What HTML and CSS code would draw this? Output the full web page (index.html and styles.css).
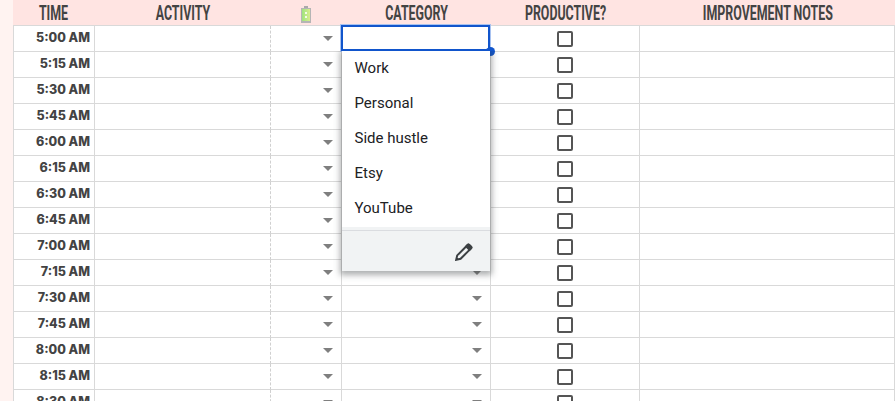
FILE: index.html
```html
<!DOCTYPE html>
<html lang="en">
<head>
<meta charset="utf-8">
<title>Time tracker</title>
<link rel="stylesheet" href="styles.css">
</head>
<body>
<div class="page">
  <div class="gutter"></div>
  <div class="sheet">
    <div class="row head">
      <div class="h"><span>TIME</span></div>
      <div class="h"><span>ACTIVITY</span></div>
      <div class="h"><svg class="battery" width="10" height="17" viewBox="0 0 10 17"><defs><linearGradient id="g" x1="0" x2="1" y1="0" y2="0"><stop offset="0" stop-color="#9fe37f"/><stop offset="1" stop-color="#d9ee8e"/></linearGradient></defs><rect x="3" y="0" width="4" height="2" fill="#a9a9a9"/><rect x="0" y="2" width="10" height="15" fill="#b5b5b5"/><rect x="1" y="3" width="8" height="12" fill="url(#g)"/><rect x="4" y="6" width="2" height="2" fill="#f4fbe8"/><rect x="4" y="10" width="2" height="2" fill="#f4fbe8"/></svg></div>
      <div class="h"><span>CATEGORY</span></div>
      <div class="h"><span>PRODUCTIVE?</span></div>
      <div class="h"><span>IMPROVEMENT NOTES</span></div>
    </div>
    <div class="row"><div class="c t">5:00 AM</div><div class="c"></div><div class="c e"><i class="a"></i></div><div class="c k"></div><div class="c p"><i class="b"></i></div><div class="c"></div></div>
    <div class="row"><div class="c t">5:15 AM</div><div class="c"></div><div class="c e"><i class="a"></i></div><div class="c k"><i class="a"></i></div><div class="c p"><i class="b"></i></div><div class="c"></div></div>
    <div class="row"><div class="c t">5:30 AM</div><div class="c"></div><div class="c e"><i class="a"></i></div><div class="c k"><i class="a"></i></div><div class="c p"><i class="b"></i></div><div class="c"></div></div>
    <div class="row"><div class="c t">5:45 AM</div><div class="c"></div><div class="c e"><i class="a"></i></div><div class="c k"><i class="a"></i></div><div class="c p"><i class="b"></i></div><div class="c"></div></div>
    <div class="row"><div class="c t">6:00 AM</div><div class="c"></div><div class="c e"><i class="a"></i></div><div class="c k"><i class="a"></i></div><div class="c p"><i class="b"></i></div><div class="c"></div></div>
    <div class="row"><div class="c t">6:15 AM</div><div class="c"></div><div class="c e"><i class="a"></i></div><div class="c k"><i class="a"></i></div><div class="c p"><i class="b"></i></div><div class="c"></div></div>
    <div class="row"><div class="c t">6:30 AM</div><div class="c"></div><div class="c e"><i class="a"></i></div><div class="c k"><i class="a"></i></div><div class="c p"><i class="b"></i></div><div class="c"></div></div>
    <div class="row"><div class="c t">6:45 AM</div><div class="c"></div><div class="c e"><i class="a"></i></div><div class="c k"><i class="a"></i></div><div class="c p"><i class="b"></i></div><div class="c"></div></div>
    <div class="row"><div class="c t">7:00 AM</div><div class="c"></div><div class="c e"><i class="a"></i></div><div class="c k"><i class="a"></i></div><div class="c p"><i class="b"></i></div><div class="c"></div></div>
    <div class="row"><div class="c t">7:15 AM</div><div class="c"></div><div class="c e"><i class="a"></i></div><div class="c k"><i class="a"></i></div><div class="c p"><i class="b"></i></div><div class="c"></div></div>
    <div class="row"><div class="c t">7:30 AM</div><div class="c"></div><div class="c e"><i class="a"></i></div><div class="c k"><i class="a"></i></div><div class="c p"><i class="b"></i></div><div class="c"></div></div>
    <div class="row"><div class="c t">7:45 AM</div><div class="c"></div><div class="c e"><i class="a"></i></div><div class="c k"><i class="a"></i></div><div class="c p"><i class="b"></i></div><div class="c"></div></div>
    <div class="row"><div class="c t">8:00 AM</div><div class="c"></div><div class="c e"><i class="a"></i></div><div class="c k"><i class="a"></i></div><div class="c p"><i class="b"></i></div><div class="c"></div></div>
    <div class="row"><div class="c t">8:15 AM</div><div class="c"></div><div class="c e"><i class="a"></i></div><div class="c k"><i class="a"></i></div><div class="c p"><i class="b"></i></div><div class="c"></div></div>
    <div class="row"><div class="c t">8:30 AM</div><div class="c"></div><div class="c e"><i class="a"></i></div><div class="c k"><i class="a"></i></div><div class="c p"><i class="b"></i></div><div class="c"></div></div>
  </div>
  <div class="selected"><span class="handle"></span></div>
  <div class="menu">
    <ul class="items">
      <li>Work</li>
      <li>Personal</li>
      <li>Side hustle</li>
      <li>Etsy</li>
      <li>YouTube</li>
    </ul>
    <div class="foot">
      <svg width="18" height="18" viewBox="0 0 18 18" fill="none" stroke="#3c4043" stroke-width="2"><path d="M1.2 16.8 L2.2 12.4 L12.6 2 Q13.4 1.2 14.2 2 L16 3.8 Q16.8 4.6 16 5.4 L5.6 15.8 Z"/><path d="M12.6 2 Q13.4 1.2 14.2 2 L16 3.8 Q16.8 4.6 16 5.4 L14.6 6.8 L11.2 3.4 Z" fill="#3c4043"/></svg>
    </div>
  </div>
</div>
</body>
</html>
```
FILE: styles.css
```css
html, body {
  margin: 0;
  padding: 0;
  background: #fff;
}
.page {
  position: relative;
  display: flex;
  width: 895px;
  height: 401px;
  overflow: hidden;
  background: #fff;
}
.gutter {
  width: 13px;
  flex: none;
  background: #fff3f1;
}
.sheet {
  flex: 1;
  min-width: 0;
}
.row {
  display: grid;
  grid-template-columns: 82px 176px 71px 149px 149px 255px;
  height: 26px;
}
.head {
  background: #ffe4e2;
  border-bottom: 1px solid #d9d9d9;
  box-sizing: border-box;
}
.h {
  display: flex;
  align-items: center;
  justify-content: center;
  height: 25px;
  font-family: Roboto, sans-serif;
  font-weight: 700;
  font-size: 20px;
  color: #434343;
  white-space: nowrap;
}
.h span {
  display: inline-block;
  transform: scaleX(0.62);
}
.battery {
  display: block;
  margin-top: 3px;
  margin-left: -1px;
}
.c {
  display: flex;
  align-items: center;
  box-sizing: border-box;
  height: 26px;
  border-right: 1px solid #d9d9d9;
  border-bottom: 1px solid #d9d9d9;
}
.t {
  justify-content: flex-end;
  padding-right: 4px;
  padding-bottom: 3px;
  border-left: 1px solid #d9d9d9;
  font-family: Inter, "Liberation Sans", sans-serif;
  font-weight: 800;
  font-size: 12.5px;
  color: #434343;
  white-space: nowrap;
}
.c:nth-child(2) {
  border-right: 1px dashed #d0d0d0;
}
.e, .k {
  justify-content: flex-end;
  padding-right: 8px;
}
.p {
  justify-content: center;
}
.a {
  display: block;
  width: 0;
  height: 0;
  border-left: 5px solid transparent;
  border-right: 5px solid transparent;
  border-top: 5px solid #7f7f7f;
}
.b {
  display: block;
  box-sizing: border-box;
  width: 16px;
  height: 16px;
  border: 2px solid #555;
  border-radius: 2px;
  background: #fff;
}
.selected {
  position: absolute;
  left: 341px;
  top: 25px;
  width: 145px;
  height: 22px;
  border: 2px solid #1155cc;
  outline: 1px solid #a8c2f0;
  background: #fff;
}
.handle {
  position: absolute;
  right: -7px;
  bottom: -7px;
  width: 9px;
  height: 9px;
  border-radius: 50%;
  background: #1155cc;
}
.menu {
  position: absolute;
  left: 342px;
  top: 51px;
  width: 148px;
  height: 220px;
  display: flex;
  flex-direction: column;
  background: #fff;
  box-shadow: 0 2px 6px 2px rgba(60, 64, 67, 0.42);
  clip-path: inset(0 -12px -12px -12px);
}
.items {
  flex: 1;
  list-style: none;
  margin: 0;
  padding: 0;
}
.items li {
  box-sizing: border-box;
  height: 35px;
  padding-left: 12.5px;
  line-height: 35px;
  font-family: Roboto, sans-serif;
  font-size: 15px;
  color: #202124;
}
.foot {
  display: flex;
  align-items: center;
  justify-content: flex-end;
  box-sizing: border-box;
  height: 44px;
  padding-top: 6px;
  padding-right: 17px;
  background: linear-gradient(#f1f3f4 0 3px, #dadce0 3px 4px, #f1f3f4 4px);
}
```
